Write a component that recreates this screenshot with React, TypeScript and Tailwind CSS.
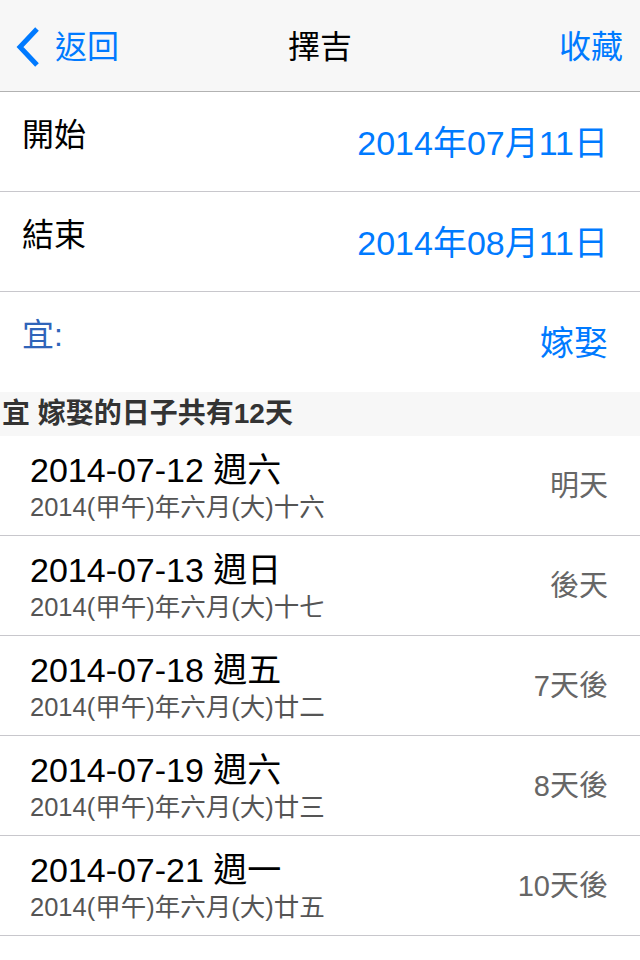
const font = "font-['Liberation_Sans','Noto_Sans_CJK_TC',sans-serif]"

interface GoodDay {
	date: string
	lunar: string
	when: string
}

const days: GoodDay[] = [
	{ date: "2014-07-12 週六", lunar: "2014(甲午)年六月(大)十六", when: "明天" },
	{ date: "2014-07-13 週日", lunar: "2014(甲午)年六月(大)十七", when: "後天" },
	{ date: "2014-07-18 週五", lunar: "2014(甲午)年六月(大)廿二", when: "7天後" },
	{ date: "2014-07-19 週六", lunar: "2014(甲午)年六月(大)廿三", when: "8天後" },
	{ date: "2014-07-21 週一", lunar: "2014(甲午)年六月(大)廿五", when: "10天後" },
]

function NavBar() {
	return (
		<div className="grid h-[92px] grid-cols-[1fr_auto_1fr] items-center border-b border-[#b2b2b2] bg-[#f7f7f7] pt-[2px]">
			<div className="flex items-center gap-[15px] pl-[14px] text-[32px] leading-none text-[#007aff]">
				<svg width="26" height="42" viewBox="0 0 26 42" fill="none">
					<path d="M23 3 L6 21 L23 39" stroke="#007aff" strokeWidth="5" />
				</svg>
				<span>返回</span>
			</div>
			<div className="text-[32px] leading-none text-black">擇吉</div>
			<div className="justify-self-end pr-[17px] text-[32px] leading-none text-[#007aff]">收藏</div>
		</div>
	)
}

function FieldRow({ label, value, labelClass, border = true }: { label: string; value: string; labelClass: string; border?: boolean }) {
	return (
		<div className={`flex h-[100px] justify-between pl-[22px] pr-[32px] ${border ? "border-b border-[#c8c7cc]" : ""}`}>
			<div className={`pt-[27px] text-[32px] leading-[32px] ${labelClass}`}>{label}</div>
			<div className="pt-[34px] text-[34px] leading-[34px] text-[#007aff]">{value}</div>
		</div>
	)
}

export default function App() {
	return (
		<div className={`min-h-[960px] w-[640px] bg-white ${font}`}>
			<NavBar />
			<FieldRow label="開始" value="2014年07月11日" labelClass="text-black" />
			<FieldRow label="結束" value="2014年08月11日" labelClass="text-black" />
			<FieldRow label="宜:" value="嫁娶" labelClass="text-[#2f64b9]" border={false} />
			<div className="flex h-[44px] items-center bg-[#f7f7f7] pl-[2px] text-[28px] font-bold text-[#333]">
				宜 嫁娶的日子共有12天
			</div>
			{days.map((d) => (
				<div key={d.date} className="flex h-[100px] items-center justify-between border-b border-[#c8c7cc] pl-[30px] pr-[32px]">
					<div className="flex flex-col pt-[2px]">
						<span className="text-[34px] leading-[36px] text-black">{d.date}</span>
						<span className="mt-[4px] text-[25.5px] leading-[30px] text-[#555]">{d.lunar}</span>
					</div>
					<span className="pt-[2px] text-[29px] leading-none text-[#666]">{d.when}</span>
				</div>
			))}
		</div>
	)
}
